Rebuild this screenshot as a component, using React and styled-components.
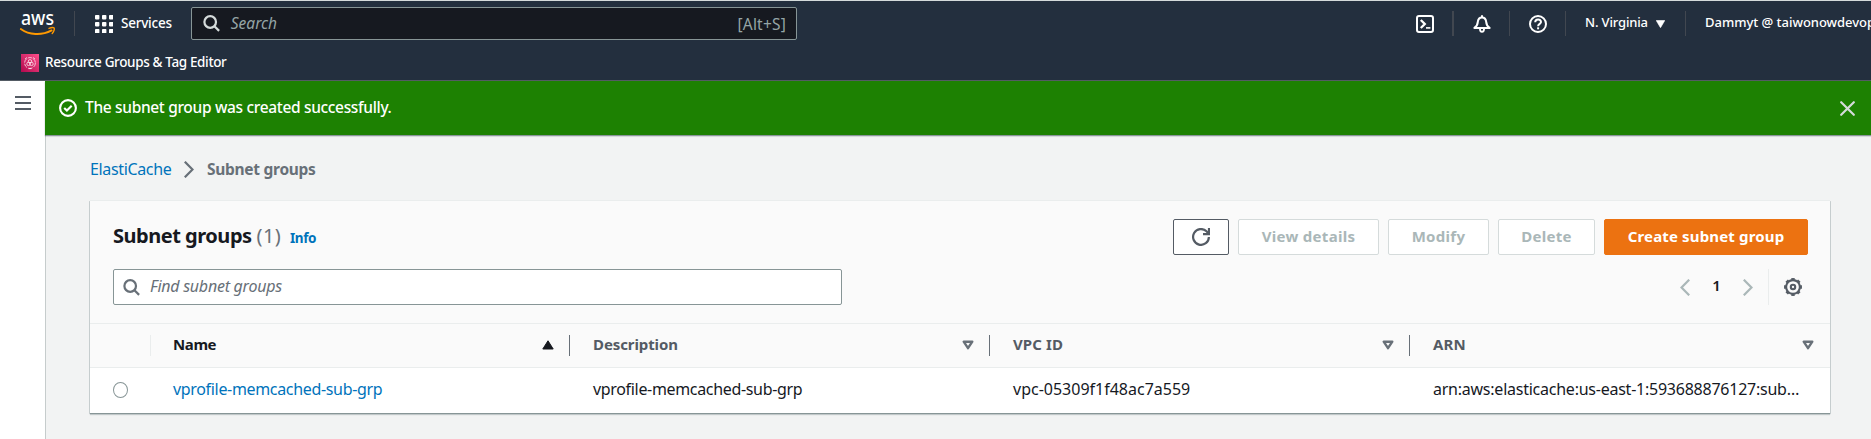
import React from 'react';
import styled, { createGlobalStyle } from 'styled-components';

const GlobalStyle = createGlobalStyle`
  *, *::before, *::after { box-sizing: border-box; }
  body {
    margin: 0;
    overflow: hidden;
    background: #f2f3f3;
    font-family: "Noto Sans", "Open Sans", sans-serif;
    font-size: 16px;
    color: #16191f;
  }
  svg { display: block; flex: none; }
`;

const Page = styled.div`
  display: flex;
  flex-direction: column;
  height: 439px;
  width: 1871px;
  overflow: hidden;
`;

const Header = styled.header`
  flex: none;
  height: 81px;
  background: #232f3e;
  border-top: 1px solid #d5dbdb;
  border-bottom: 1px solid #545b64;
  color: #fff;
`;

const TopBar = styled.div`
  display: flex;
  align-items: center;
  height: 44px;
  padding: 0 0 0 20px;
  white-space: nowrap;
`;

const Divider = styled.span`
  flex: none;
  width: ${p => p.$w || 1}px;
  height: 25px;
  background: #414750;
`;

const Label = styled.span`
  flex: none;
  display: block;
  width: ${p => (p.$w ? p.$w + 'px' : 'auto')};
  font-size: ${p => p.$size || 16}px;
  font-weight: ${p => p.$weight || 400};
  font-style: ${p => (p.$italic ? 'italic' : 'normal')};
  letter-spacing: ${p => p.$track || 0}px;
  line-height: 22px;
  color: ${p => p.$color || 'inherit'};
  white-space: nowrap;
`;

const ServicesButton = styled.div`
  display: flex;
  align-items: center;
  gap: 8px;
  width: 116px;
  padding-left: 20px;
  padding-top: 1px;
  ${Label} { position: relative; top: -1px; }
`;

const GlobalSearch = styled.div`
  display: flex;
  align-items: center;
  width: 607px;
  height: 33px;
  margin-top: 1px;
  padding: 0 10px 0 11px;
  background: #161920;
  border: 1px solid #879596;
  border-radius: 2px;
  ${Label}:nth-of-type(1) { margin-left: 11px; position: relative; top: -1px; }
  ${Label}:last-child { margin-left: auto; }
`;

const LogoBox = styled.div`
  width: 54px;
  margin-top: 1px;
`;

const NavTools = styled.div`
  display: flex;
  align-items: center;
  margin-left: 619px;
  padding-top: 1px;
`;

const IconButton = styled.span`
  display: flex;
  justify-content: center;
  width: ${p => p.$w}px;
`;

const NavMenu = styled.span`
  display: flex;
  align-items: center;
  gap: 6px;
  width: ${p => p.$w}px;
  padding-left: 19px;
  ${Label} { position: relative; top: -2px; }
`;

const Favorites = styled.div`
  display: flex;
  align-items: center;
  gap: 6px;
  height: 35px;
  padding: 0 0 0 21px;
  ${Label} { position: relative; top: -1px; }
`;

const Body = styled.div`
  display: flex;
  flex: 1;
`;

const SideRail = styled.nav`
  width: 45px;
  background: #fff;
  padding: 15px 0 0 15px;
`;

const MenuBars = styled.div`
  display: flex;
  flex-direction: column;
  gap: 4px;
  width: 16px;
  i { height: 2px; background: #545b64; }
`;

const Main = styled.main`
  flex: 1;
  background: #f2f3f3;
  border-left: 1px solid #c6cccc;
`;

const Flash = styled.div`
  display: flex;
  align-items: center;
  height: 54px;
  margin-left: -1px;
  padding: 0 16px 0 14px;
  background: #1d8102;
  color: #fff;
  box-shadow: 0 1px 1px rgba(0, 28, 36, 0.4), 0 2px 1px rgba(0, 28, 36, 0.05);
  ${Label} { margin-left: 8px; position: relative; top: -1px; }
  svg:last-child { margin-left: auto; }
`;

const Breadcrumbs = styled.div`
  display: flex;
  align-items: center;
  height: 65px;
  padding-left: 44px;
  padding-top: 2px;
  svg { margin: 2px 13px 0 12px; }
  ${Label} { position: relative; top: 0; }
`;

const Card = styled.section`
  margin: 0 41px 0 44px;
  height: 213px;
  background: #fff;
  border-top: 1px solid #eaeded;
  box-shadow: 0 1px 0 #879596, 0 2px 1px rgba(0, 28, 36, 0.2), -1px 1px 0 #cdd3d4, 1px 1px 0 #cdd3d4;
`;

const CardHead = styled.div`
  height: 122px;
  padding: 18px 22px 0 23px;
  background: #fafafa;
`;

const TitleRow = styled.div`
  display: flex;
  align-items: center;
  height: 36px;
`;

const Title = styled.h2`
  display: flex;
  align-items: baseline;
  margin: 0 auto 0 0;
  ${Label}:nth-child(2) { margin-left: 5px; }
  ${Label}:nth-child(3) { margin-left: 9px; }
`;

const Button = styled.button`
  display: flex;
  align-items: center;
  justify-content: center;
  width: ${p => p.$w}px;
  height: 36px;
  margin: 0 0 0 9px;
  padding: 0 0 2px;
  font: 700 15px/22px "Noto Sans", sans-serif;
  letter-spacing: ${p => p.$track || 0}px;
  border-radius: 2px;
  border: 1px solid ${p => (p.$primary ? '#ec7211' : p.$icon ? '#545b64' : '#d5dbdb')};
  background: ${p => (p.$primary ? '#ec7211' : '#fff')};
  color: ${p => (p.$primary ? '#fff' : '#aab7b8')};
  white-space: nowrap;
  svg { margin-top: 2px; }
`;

const ToolsRow = styled.div`
  display: flex;
  align-items: center;
  height: 36px;
  margin-top: 14px;
`;

const Filter = styled.div`
  display: flex;
  align-items: center;
  gap: 10px;
  width: 729px;
  height: 36px;
  padding: 0 9px;
  background: #fff;
  border: 1px solid #879596;
  border-radius: 2px;
  ${Label} { position: relative; top: -1px; }
`;

const Pager = styled.div`
  display: flex;
  align-items: center;
  height: 36px;
  margin-left: auto;
  padding-right: 6px;
  ${Label} { width: 53px; text-align: center; position: relative; top: -2px; }
`;

const PagerRule = styled.span`
  width: 1px;
  height: 36px;
  margin: 0 15px 0 15px;
  background: #eaeded;
`;

const Row = styled.div`
  display: grid;
  grid-template-columns: 60px 420px 420px 420px 420px;
  align-items: center;
  height: 45px;
  background: ${p => (p.$head ? '#fafafa' : '#fff')};
  border-top: ${p => (p.$head ? '1px solid #eaeded' : '0')};
  border-bottom: ${p => (p.$head ? '1px solid #eaeded' : '0')};
`;

const HeadCell = styled.div`
  display: flex;
  align-items: center;
  justify-content: space-between;
  height: 21px;
  padding: 0 ${p => (p.$last ? 16 : 15)}px 0 23px;
  border-right: ${p => (p.$last ? 0 : 1)}px solid ${p => (p.$light ? '#eaeded' : '#687078')};
  ${Label} { position: relative; top: -2px; }
  svg { margin-top: -1px; }
`;

const SelectHead = styled(HeadCell)`
  width: 61px;
`;

const Cell = styled.div`
  padding: 0 18px 0 23px;
  min-width: 0;
  ${Label} { position: relative; top: -2px; }
`;

const Radio = styled.span`
  display: block;
  width: 15px;
  height: 16px;
  margin-top: -2px;
  border: 1px solid #879596;
  border-radius: 50%;
  background: #fff;
`;

const AwsLogo = () => (
  <svg width="36" height="26" viewBox="0 -2 36 26" overflow="visible">
    <text x="1" y="12.200" fontSize="20" fontWeight="500" fill="#fff" textLength="33" lengthAdjust="spacingAndGlyphs">aws</text>
    <path d="M.8 16C9 22 21.500 22.800 31.600 17.400" fill="none" stroke="#f90" strokeWidth="1.900" strokeLinecap="round" />
    <path d="M29 15.400c2-.9 4.600-.9 5.200-.3.500.8-.4 3.800-2 5.400" fill="none" stroke="#f90" strokeWidth="1.400" strokeLinecap="round" />
  </svg>
);

const GridIcon = () => (
  <svg width="18" height="18" viewBox="0 0 18 18" fill="#fff">
    {[0, 7, 14].map(y => [0, 7, 14].map(x => <rect key={x + '-' + y} x={x} y={y} width="4.4" height="4.4" rx=".8" />))}
  </svg>
);

const SearchIcon = ({ color }) => (
  <svg width="17" height="17" viewBox="0 0 17 17" fill="none" stroke={color} strokeWidth="2.2">
    <circle cx="7.2" cy="7" r="5.8" />
    <path d="M11.2 11l4.900 4.900" />
  </svg>
);

const TerminalIcon = () => (
  <svg width="18" height="18" viewBox="0 0 18 18" fill="none" stroke="#fff" strokeWidth="2">
    <rect x="1" y="1" width="16" height="16" rx="2" />
    <path d="M4.8 5l4 4-4 4" strokeWidth="2.300" />
    <path d="M10 12.900h4.400" strokeWidth="1.600" />
  </svg>
);

const BellIcon = () => (
  <svg width="18" height="18" viewBox="0 0 18 18" fill="none" stroke="#fff" strokeWidth="2" strokeLinejoin="round">
    <path d="M1.400 12.900c2.600-1.500 3.200-3.200 3.400-6C5.100 4 6.700 2.400 9 2.400s3.900 1.600 4.200 4.500c.2 2.800.8 4.500 3.400 6z" />
    <path d="M9 .3v2" />
    <path d="M6.900 13.600c0 4.400 4.200 4.400 4.200 0" strokeWidth="1.800" />
  </svg>
);

const HelpIcon = () => (
  <svg width="18" height="18" viewBox="0 0 18 18" fill="none" stroke="#fff" strokeWidth="2">
    <circle cx="9" cy="9" r="8" />
    <path d="M6.200 7.300c0-3.600 5.800-3.600 5.800-.3C12 8.900 9.100 8.800 9.100 11.200" />
    <path d="M9.100 12.300v2" />
  </svg>
);

const ResourceIcon = () => (
  <svg width="18" height="18" viewBox="0 0 18 18">
    <defs>
      <linearGradient id="pink" x1="0" y1="1" x2="1" y2="0">
        <stop offset="0" stopColor="#b0084d" />
        <stop offset="1" stopColor="#ff4f8b" />
      </linearGradient>
    </defs>
    <rect width="18" height="18" fill="url(#pink)" />
    <g fill="none" stroke="#fff" strokeWidth=".7">
      <circle cx="9" cy="9" r="5.400" strokeDasharray="4.400 1.250" />
      <circle cx="9" cy="7.300" r="1.700" />
      <circle cx="7.500" cy="9.900" r="1.700" />
      <circle cx="10.500" cy="9.900" r="1.700" />
      <path d="M4 5l2-1.500M14 5l-2-1.500M7.500 14.600h3" />
    </g>
  </svg>
);

const CheckIcon = () => (
  <svg width="18" height="18" viewBox="0 0 18 18" fill="none" stroke="#fff" strokeWidth="2.100">
    <circle cx="9" cy="9" r="7.900" />
    <path d="M5.200 8.900l2.700 2.700 4.800-4.900" />
  </svg>
);

const CloseIcon = () => (
  <svg width="15" height="15" viewBox="0 0 15 15" fill="none" stroke="#d5dbdb" strokeWidth="2.200" strokeLinecap="round">
    <path d="M1.200 1.200l12.600 12.600M13.800 1.200L1.200 13.800" />
  </svg>
);

const Chevron = ({ left, color }) => (
  <svg width="10" height="17" viewBox="0 0 10 17" fill="none" stroke={color} strokeWidth="2.200">
    <path d={left ? 'M9.200 .7L1.500 8.500l7.700 7.800' : 'M.8 .7l7.700 7.800L.8 16.300'} />
  </svg>
);

const RefreshIcon = () => (
  <svg width="18" height="18" viewBox="0 0 18 18" fill="none" stroke="#545b64" strokeWidth="2.200">
    <path d="M16.900 9a7.900 7.900 0 1 1-2.400-5.700l1.800 1.900" />
    <path d="M17 0v6.100h-6" />
  </svg>
);

const TEETH = [0, 45, 90, 135, 180, 225, 270, 315];

const GearIcon = () => (
  <svg width="18" height="18" viewBox="0 0 18 18" fill="none" stroke="#545b64" strokeWidth="2.100">
    <circle cx="9" cy="9" r="6.900" />
    <circle cx="9" cy="9" r="2.200" />
    {TEETH.map(a => (
      <path key={a} d="M7.300 1h3.400" strokeWidth="1.900" transform={`rotate(${a} 9 9)`} />
    ))}
  </svg>
);

const SortIcon = ({ active }) => (
  <svg width="12" height="10" viewBox="0 0 12 10">
    {active
      ? <path d="M6 .8L11.200 9H.8z" fill="#16191f" stroke="#16191f" strokeLinejoin="round" />
      : <path d="M1.700 1.700h8.600L6 8.200z" fill="none" stroke="#687078" strokeWidth="2.400" strokeLinejoin="round" />}
  </svg>
);

const columns = [
  { name: 'Name', track: -0.4, active: true },
  { name: 'Description', track: -0.1 },
  { name: 'VPC ID', track: 0.1 },
  { name: 'ARN', track: 0.1 },
];

const cells = [
  { text: 'vprofile-memcached-sub-grp', track: -0.33, color: '#0073bb' },
  { text: 'vprofile-memcached-sub-grp', track: -0.33 },
  { text: 'vpc-05309f1f48ac7a559', track: 0 },
  { text: 'arn:aws:elasticache:us-east-1:593688876127:sub…', track: -0.24 },
];

export default function App() {
  return (
    <Page>
      <GlobalStyle />
      <Header>
        <TopBar>
          <LogoBox><AwsLogo /></LogoBox>
          <Divider />
          <ServicesButton>
            <GridIcon />
            <Label $size={13.5} $weight={500} $track={-0.2}>Services</Label>
          </ServicesButton>
          <GlobalSearch>
            <SearchIcon color="#d5dbdb" />
            <Label $italic $size={15.5} $color="#95a5a6">Search</Label>
            <Label $size={15.5} $track={0.2} $color="#95a5a6">[Alt+S]</Label>
          </GlobalSearch>
          <NavTools>
            <IconButton $w={18}><TerminalIcon /></IconButton>
            <IconButton $w={18} />
            <Divider $w={2} />
            <IconButton $w={55}><BellIcon /></IconButton>
            <Divider />
            <IconButton $w={55}><HelpIcon /></IconButton>
            <Divider />
            <NavMenu $w={119}>
              <Label $size={13} $weight={500} $w={65} $track={-0.15}>N. Virginia</Label>
              <svg width="9" height="8" viewBox="0 0 9 8"><path d="M.2.5h8.600L4.500 7.700z" fill="#fff" stroke="#fff" strokeWidth=".6" /></svg>
            </NavMenu>
            <Divider />
            <NavMenu $w={185}>
              <Label $size={13} $weight={500} $track={-0.03}>Dammyt @ taiwonowdevop</Label>
            </NavMenu>
          </NavTools>
        </TopBar>
        <Favorites>
          <ResourceIcon />
          <Label $size={13.5} $weight={500} $track={-0.36}>Resource Groups &amp; Tag Editor</Label>
        </Favorites>
      </Header>
      <Body>
        <SideRail>
          <MenuBars><i /><i /><i /></MenuBars>
        </SideRail>
        <Main>
          <Flash>
            <CheckIcon />
            <Label $size={15.5} $weight={500} $track={-0.33}>The subnet group was created successfully.</Label>
            <CloseIcon />
          </Flash>
          <Breadcrumbs>
            <Label $w={82} $track={-0.35} $color="#0073bb">ElastiCache</Label>
            <Chevron color="#687078" />
            <Label $size={15.5} $weight={700} $track={-0.28} $color="#687078">Subnet groups</Label>
          </Breadcrumbs>
          <Card>
            <CardHead>
              <TitleRow>
                <Title>
                  <Label $size={20} $weight={700} $track={-0.48}>Subnet groups</Label>
                  <Label $size={20} $color="#687078" $track={0.3}>(1)</Label>
                  <Label $size={13.5} $weight={700} $track={-0.4} $color="#0073bb">Info</Label>
                </Title>
                <Button $w={56} $icon><RefreshIcon /></Button>
                <Button $w={141} $track={0.3}>View details</Button>
                <Button $w={101} $track={0.3}>Modify</Button>
                <Button $w={97} $track={0.25}>Delete</Button>
                <Button $w={204} $primary $track={0.15}>Create subnet group</Button>
              </TitleRow>
              <ToolsRow>
                <Filter>
                  <SearchIcon color="#687078" />
                  <Label $italic $track={-0.25} $color="#687078">Find subnet groups</Label>
                </Filter>
                <Pager>
                  <Chevron left color="#aab7b8" />
                  <Label $size={15} $weight={600}>1</Label>
                  <Chevron color="#aab7b8" />
                  <PagerRule />
                  <GearIcon />
                </Pager>
              </ToolsRow>
            </CardHead>
            <Row $head>
              <SelectHead $light />
              {columns.map((col, i) => (
                <HeadCell key={col.name} $last={i === columns.length - 1}>
                  <Label $size={15} $weight={700} $track={col.track} $color={col.active ? '#16191f' : '#545b64'}>{col.name}</Label>
                  <SortIcon active={col.active} />
                </HeadCell>
              ))}
            </Row>
            <Row>
              <Cell><Radio /></Cell>
              {cells.map((cell, i) => (
                <Cell key={i}><Label $track={cell.track} $color={cell.color}>{cell.text}</Label></Cell>
              ))}
            </Row>
          </Card>
        </Main>
      </Body>
    </Page>
  );
}
